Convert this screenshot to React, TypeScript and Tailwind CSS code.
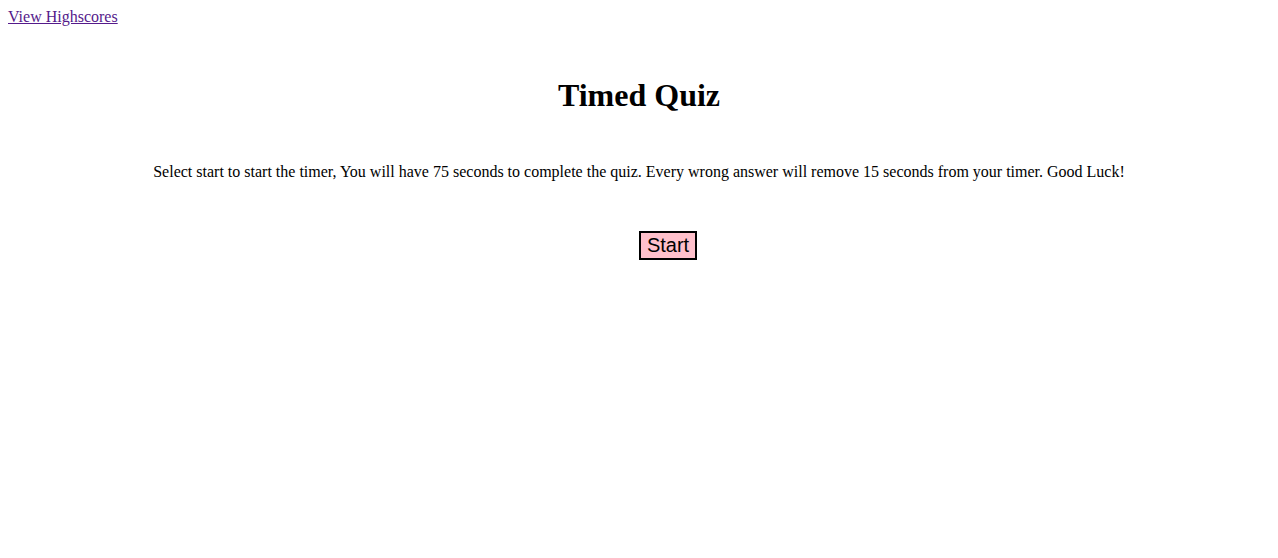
export default function App() {
  return (
    <div className="min-h-[558px] bg-white p-2 font-['Liberation_Serif',serif] text-black">
      <header>
        <a href="#" className="block w-fit text-[16px] leading-[18px] text-[#551a8b] underline">
          View Highscores
        </a>
      </header>
      <main className="flex flex-col items-center">
        <h1 className="mt-[51px] text-[32px] font-bold leading-[37px]">Timed Quiz</h1>
        <p className="mt-[49px] text-[16px] leading-[18px]">
          Select start to start the timer, You will have 75 seconds to complete the quiz. Every wrong answer will remove 15 seconds from your timer. Good Luck!
        </p>
        <button className="mt-[50px] ml-[58px] h-[29px] w-[58px] border-2 border-black bg-[#ffc0cb] font-['Liberation_Sans',sans-serif] text-[20px] leading-[23px] text-black">
          Start
        </button>
      </main>
    </div>
  );
}
